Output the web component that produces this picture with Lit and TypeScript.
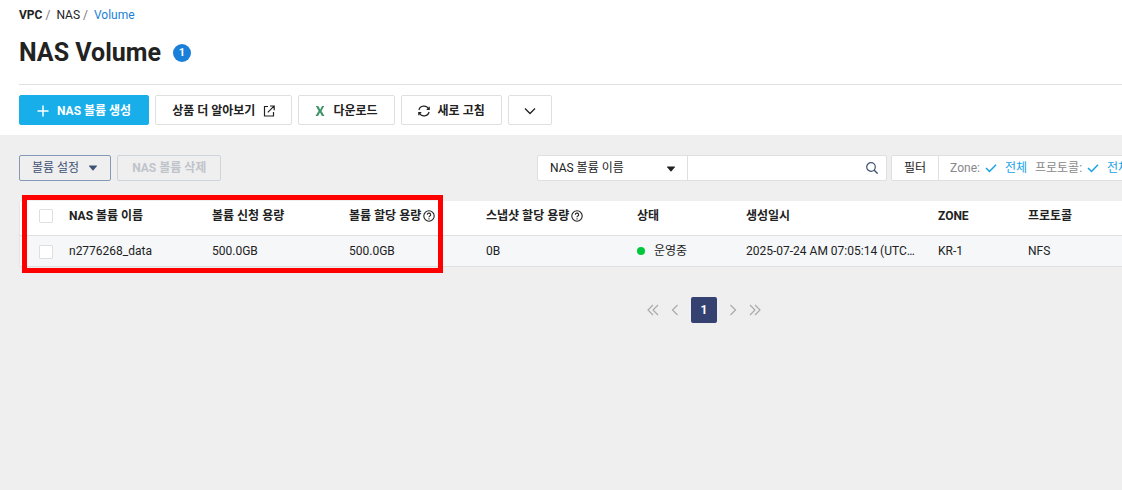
import { LitElement, html, css, svg, nothing } from "lit";
import { customElement, state } from "lit/decorators.js";

interface Column {
  id: string;
  label: string;
  help?: boolean;
}

const columns: Column[] = [
  { id: "name", label: "NAS 볼륨 이름" },
  { id: "requested", label: "볼륨 신청 용량" },
  { id: "allocated", label: "볼륨 할당 용량", help: true },
  { id: "snapshot", label: "스냅샷 할당 용량", help: true },
  { id: "status", label: "상태" },
  { id: "created", label: "생성일시" },
  { id: "zone", label: "ZONE" },
  { id: "protocol", label: "프로토콜" },
];

const rows: Record<string, string>[] = [
  {
    name: "n2776268_data",
    requested: "500.0GB",
    allocated: "500.0GB",
    snapshot: "0B",
    status: "운영중",
    created: "2025-07-24 AM 07:05:14 (UTC…",
    zone: "KR-1",
    protocol: "NFS",
  },
];

const filters = [
  { label: "Zone:", value: "전체" },
  { label: "프로토콜:", value: "전체" },
];

const icon = (size: number, body: unknown) => html`<svg
  class="icon"
  width=${size}
  height=${size}
  viewBox="0 0 ${size} ${size}"
  aria-hidden="true"
>${body}</svg>`;

const plus = icon(12, svg`<path d="M6 .5v11M.5 6h11" stroke-width="1.5" />`);
const external = icon(12, svg`<path d="M5 1.5H1.5v9.5H10.5V7M7 1H11.2V5.2M11 1.2L4.8 7.4" stroke-width="1.2" />`);
const sheet = icon(10, svg`<path d="M.8 0H3.300L5.200 3.400 7 0H9.200L6.500 4.900 9.500 10H6.900L5 6.500 3.100 10H.5L3.600 4.900z" fill="#3f9468" stroke="none" />`);
const refresh = icon(12, svg`<path d="M.9 5A5.200 5.200 0 0 1 10.500 3.800M11.100 7A5.200 5.200 0 0 1 1.500 8.200M11.200 1.800V4.300H8.700M.8 10.200V7.700H3.300" stroke-width="1.200" />`);
const chevron = icon(12, svg`<path d="M1 3.500l5 5 5-5" stroke-width="1.300" />`);
const caret = icon(10, svg`<path d="M1.500 2.500h7q.8 0 .3.700L5.500 7.200q-.5.500-1 0L1.200 3.200q-.5-.7.300-.7z" fill="currentColor" stroke="none" />`);
const search = icon(12, svg`<circle cx="5" cy="5" r="4.300" stroke-width="1.200" /><path d="M8 8l3.600 3.600" stroke-width="1.400" />`);
const check = icon(12, svg`<path d="M1 6l3.500 3.500L11 2.800" stroke-width="1.500" />`);
const help = icon(12, svg`<circle cx="6" cy="6" r="5.200" stroke-width="1.100" /><path d="M4.300 4.800a1.700 1.600 0 1 1 2.500 1.300Q6 6.500 6 7.300M6 8.300v1.100" stroke-width="1.100" />`);
const first = icon(12, svg`<path d="M6 1L1 6l5 5M11 1L6 6l5 5" stroke-width="1.200" />`);
const prev = icon(12, svg`<path d="M8.500 1l-5 5 5 5" stroke-width="1.200" />`);
const next = icon(12, svg`<path d="M3.500 1l5 5-5 5" stroke-width="1.200" />`);
const last = icon(12, svg`<path d="M1 1l5 5-5 5M6 1l5 5-5 5" stroke-width="1.200" />`);

@customElement("app-root")
export class AppRoot extends LitElement {
  static styles = css`
    :host {
      display: flex;
      flex-direction: column;
      min-height: 100vh;
      overflow: hidden;
      background: #efefef;
      color: #222;
      font: 12px/16px Roboto, "Noto Sans CJK KR", sans-serif;
    }
    * {
      box-sizing: border-box;
    }
    button,
    input,
    select {
      font: inherit;
      color: inherit;
      margin: 0;
    }
    button {
      cursor: pointer;
      white-space: nowrap;
    }
    a {
      color: inherit;
      text-decoration: none;
    }
    .icon {
      flex: none;
      display: block;
      fill: none;
      stroke: currentColor;
    }
    .head {
      background: #fff;
      padding: 7px 0 10px 19px;
    }
    .crumbs {
      display: flex;
      gap: 3px;
    }
    .crumbs .root {
      font-weight: 700;
    }
    .crumbs .slash {
      color: #777;
      padding-right: 3px;
    }
    .crumbs .here {
      color: #1a7fd9;
    }
    .heading {
      display: flex;
      align-items: center;
      gap: 12px;
      padding: 14px 0 15px;
    }
    h1 {
      margin: 0;
      font-size: 25px;
      line-height: 32px;
      font-weight: 700;
    }
    .count {
      width: 18px;
      border-radius: 9px;
      background: #1a7fd9;
      color: #fff;
      font-size: 11px;
      line-height: 18px;
      font-weight: 700;
      text-align: center;
    }
    .toolbar {
      display: flex;
      gap: 6px;
      border-top: 1px solid #dfdfdf;
      padding-top: 10px;
    }
    .button {
      display: flex;
      align-items: center;
      gap: 8px;
      height: 30px;
      padding: 1px 16px 0;
      border: 1px solid #dfdfdf;
      border-radius: 2px;
      background: #fff;
      font-weight: 700;
    }
    .button.primary {
      padding: 1px 17px 0;
      border-color: #17aeea;
      background: #17aeea;
      color: #fff;
    }
    .button.more {
      padding: 1px 15px 0;
    }
    .main {
      min-width: 1389px;
      padding: 20px 0 0 19px;
    }
    .controls {
      display: flex;
      justify-content: space-between;
    }
    .group {
      display: flex;
      gap: 6px;
    }
    .small {
      display: flex;
      align-items: center;
      gap: 9px;
      height: 26px;
      padding: 0 12px;
      border: 1px solid #8499b8;
      border-radius: 2px;
      background: transparent;
      color: #3f5374;
    }
    .small:disabled {
      padding: 0 14px;
      border-color: #d0d5dc;
      color: #bfc4cb;
      font-weight: 700;
      cursor: default;
    }
    .finder {
      display: flex;
      width: 852px;
      gap: 4px;
    }
    .search,
    .filter {
      display: flex;
      height: 26px;
      border: 1px solid #dfdfdf;
      border-radius: 2px;
      background: #fff;
    }
    .search {
      width: 350px;
    }
    .filter {
      flex: 1;
    }
    .field {
      position: relative;
      width: 150px;
      border-right: 1px solid #dfdfdf;
    }
    .field select {
      width: 100%;
      height: 24px;
      padding: 0 12px;
      border: 0;
      background: transparent;
      appearance: none;
    }
    .field .icon {
      position: absolute;
      right: 11px;
      top: 8px;
      pointer-events: none;
    }
    .search input {
      flex: 1;
      min-width: 0;
      padding: 0 8px;
      border: 0;
      background: transparent;
    }
    .plain {
      padding: 0 8px;
      border: 0;
      background: transparent;
      color: #3f5374;
    }
    .open {
      padding: 0 12px;
      border: 0;
      border-right: 1px solid #dfdfdf;
      background: transparent;
    }
    .chosen {
      display: flex;
      align-items: center;
      gap: 8px;
      padding-left: 11px;
      color: #888;
    }
    .pair {
      display: flex;
      align-items: center;
      gap: 5px;
    }
    .value {
      display: flex;
      align-items: center;
      gap: 8px;
      color: #17a3e6;
    }
    .list {
      position: relative;
      margin-top: 20px;
    }
    table {
      width: 100%;
      table-layout: fixed;
      border-collapse: separate;
      border-spacing: 0;
      border-left: 1px solid #e4e4e4;
      border-radius: 2px;
      background: #fff;
    }
    th,
    td {
      padding: 0;
      border-bottom: 1px solid #dfdfdf;
      text-align: left;
      white-space: nowrap;
    }
    th {
      height: 35px;
      padding-bottom: 4px;
    }
    td {
      height: 31px;
      background: #f5f7f9;
    }
    td.pick {
      padding: 1px 0 0 19px;
    }
    .pick {
      padding-left: 19px;
      width: 49px;
    }
    .name {
      width: 143px;
    }
    .requested,
    .allocated {
      width: 137px;
    }
    .snapshot {
      width: 151px;
    }
    .status {
      width: 109px;
    }
    .created {
      width: 192px;
    }
    .zone {
      width: 90px;
    }
    .label {
      display: flex;
      align-items: center;
      gap: 2px;
    }
    .state {
      display: flex;
      align-items: center;
      gap: 9px;
    }
    .dot {
      width: 8px;
      height: 8px;
      border-radius: 50%;
      background: #00c73c;
    }
    .box {
      display: block;
      appearance: none;
      width: 14px;
      height: 14px;
      border: 1px solid #dfdfdf;
      border-radius: 1px;
      background: #fff;
    }
    .box:checked {
      background: #17aeea;
    }
    .mark {
      position: absolute;
      left: 3px;
      top: -6px;
      bottom: -6px;
      width: 421px;
      border: 5px solid #f00;
      pointer-events: none;
    }
    .pages {
      display: flex;
      justify-content: center;
      align-items: center;
      gap: 10px;
      padding-top: 30px;
    }
    .pages button {
      padding: 0;
      border: 0;
      background: transparent;
      color: #aaa;
    }
    .pages .current {
      width: 26px;
      height: 26px;
      border-radius: 2px;
      background: #354170;
      color: #fff;
      font-weight: 700;
    }
  `;

  @state() private picked = new Set<number>();

  private toggle(index: number) {
    const copy = new Set(this.picked);
    copy.has(index) ? copy.delete(index) : copy.add(index);
    this.picked = copy;
  }

  private toggleAll() {
    this.picked = this.picked.size === rows.length ? new Set() : new Set(rows.map((_, i) => i));
  }

  private cell(id: string, value: string) {
    return id === "status" ? html`<div class="state"><span class="dot"></span>${value}</div>` : value;
  }

  render() {
    return html`
      <header class="head">
        <nav class="crumbs" aria-label="Breadcrumb">
          <a class="root" href="#vpc">VPC</a><span class="slash">/</span>
          <a href="#nas">NAS</a><span class="slash">/</span>
          <a class="here" href="#volume">Volume</a>
        </nav>
        <div class="heading">
          <h1>NAS Volume</h1>
          <span class="count">1</span>
        </div>
        <div class="toolbar">
          <button class="button primary">${plus}NAS 볼륨 생성</button>
          <button class="button">상품 더 알아보기${external}</button>
          <button class="button">${sheet}다운로드</button>
          <button class="button">${refresh}새로 고침</button>
          <button class="button more" aria-label="더 보기">${chevron}</button>
        </div>
      </header>
      <main class="main">
        <div class="controls">
          <div class="group">
            <button class="small">볼륨 설정${caret}</button>
            <button class="small" disabled>NAS 볼륨 삭제</button>
          </div>
          <div class="finder">
            <div class="search">
              <div class="field">
                <select aria-label="검색 항목">
                  <option>NAS 볼륨 이름</option>
                </select>
                ${caret}
              </div>
              <input type="text" aria-label="검색어" />
              <button class="plain" aria-label="검색">${search}</button>
            </div>
            <div class="filter">
              <button class="open">필터</button>
              <div class="chosen">
                ${filters.map(
                  (f) => html`<div class="pair">
                    <span>${f.label}</span><span class="value">${check}${f.value}</span>
                  </div>`
                )}
              </div>
            </div>
          </div>
        </div>
        <div class="list">
          <table>
            <thead>
              <tr>
                <th class="pick">
                  <input
                    class="box"
                    type="checkbox"
                    aria-label="전체 선택"
                    .checked=${this.picked.size === rows.length}
                    @change=${this.toggleAll}
                  />
                </th>
                ${columns.map(
                  (c) => html`<th class=${c.id}>
                    <div class="label">${c.label}${c.help ? help : nothing}</div>
                  </th>`
                )}
              </tr>
            </thead>
            <tbody>
              ${rows.map(
                (r, i) => html`<tr>
                  <td class="pick">
                    <input
                      class="box"
                      type="checkbox"
                      aria-label=${r.name}
                      .checked=${this.picked.has(i)}
                      @change=${() => this.toggle(i)}
                    />
                  </td>
                  ${columns.map((c) => html`<td class=${c.id}>${this.cell(c.id, r[c.id])}</td>`)}
                </tr>`
              )}
            </tbody>
          </table>
          <div class="mark"></div>
        </div>
        <nav class="pages" aria-label="페이지">
          <button aria-label="처음">${first}</button>
          <button aria-label="이전">${prev}</button>
          <button class="current" aria-current="page">1</button>
          <button aria-label="다음">${next}</button>
          <button aria-label="마지막">${last}</button>
        </nav>
      </main>
    `;
  }
}
